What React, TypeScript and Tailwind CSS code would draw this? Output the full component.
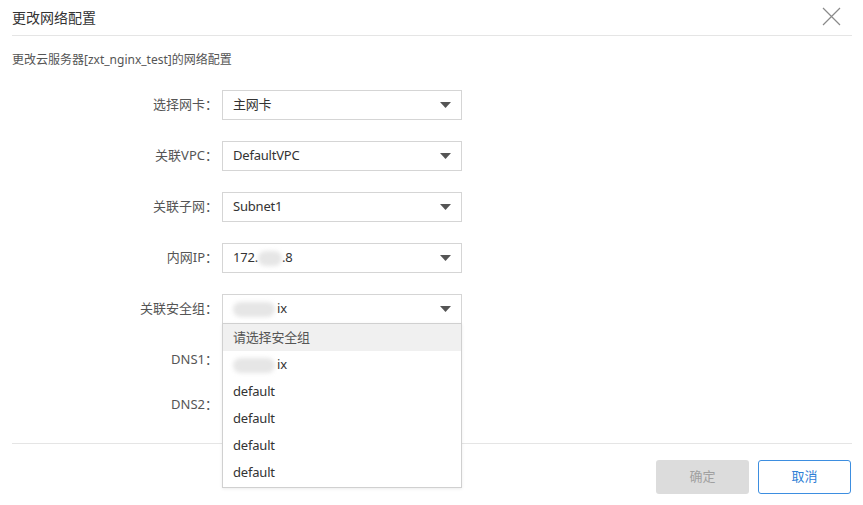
import React from "react";

const FONT = { fontFamily: '"Noto Sans", "Noto Sans CJK SC", sans-serif' };

const Caret = () => (
  <svg width="11" height="6" viewBox="0 0 11 6" className="shrink-0">
    <path d="M0 0 H11 L5.5 6 Z" fill="#555" />
  </svg>
);

const Blur = ({ w }: { w: number }) => (
  <span
    className="inline-block h-[15px] rounded-full bg-[#e6e6e6] blur-[2px] align-middle"
    style={{ width: w }}
  />
);

interface RowProps {
  label: string;
  children?: React.ReactNode;
  select?: boolean;
  overlay?: React.ReactNode;
}

const Row: React.FC<RowProps> = ({ label, children, select = true, overlay }) => (
  <div className="flex items-center h-[30px]">
    <div className="w-[218px] text-right text-[13px] text-[#555]">{label}</div>
    <div className="relative ml-[4px] w-[240px] h-[30px]">
      <div className="flex items-center justify-between h-full border border-[#d5d5d5] bg-white pl-[10px] pr-[10px] text-[13px] text-[#333] tracking-[-0.2px]">
        <span className="flex items-center">{children}</span>
        {select && <Caret />}
      </div>
      {overlay}
    </div>
  </div>
);

export default function App() {
  const options = ["default", "default", "default", "default"];

  return (
    <div className="w-[863px] h-[505px] bg-white relative" style={FONT}>
      {/* 헤더 */}
      <div className="flex items-center justify-between h-[36px] ml-3 mr-[11px] border-b border-[#e5e5e5]">
        <h1 className="text-[14px] text-[#333]">更改网络配置</h1>
        <svg width="19" height="19" viewBox="0 0 19 19" className="mr-[11px] mb-[2px]">
          <path d="M1 1 L18 18 M18 1 L1 18" stroke="#8a8a8a" strokeWidth="1.2" />
        </svg>
      </div>

      <p className="ml-3 mt-[15px] text-[12px] leading-[18px] text-[#555]">
        更改云服务器[zxt_nginx_test]的网络配置
      </p>

      {/* 폼 */}
      <div className="flex flex-col gap-[21px] mt-[21px]">
        <Row label="选择网卡：">主网卡</Row>
        <Row label="关联VPC：">DefaultVPC</Row>
        <Row label="关联子网：">Subnet1</Row>
        <Row label="内网IP：">
          172.
          <Blur w={24} />
          .8
        </Row>
        <Row
          label="关联安全组："
          overlay={
            <div className="absolute left-0 top-[29px] z-10 w-[240px] pb-[1px] border border-[#d0d0d0] bg-white shadow-[0_1px_3px_rgba(0,0,0,0.08)] text-[13px] text-[#333] tracking-[-0.2px]">
              <div className="flex items-center h-[27px] px-[10px] pt-[1px] bg-[#f0f0f0] text-[#555]">
                请选择安全组
              </div>
              <div className="flex items-center h-[27px] px-[10px] pt-[1px]">
                <Blur w={42} />
                <span className="ml-[2px]">ix</span>
              </div>
              {options.map((o, i) => (
                <div key={i} className="flex items-center h-[27px] px-[10px] pt-[1px]">
                  {o}
                </div>
              ))}
            </div>
          }
        >
          <Blur w={42} />
          <span className="ml-[2px]">ix</span>
        </Row>
        <Row label="DNS1：" select={false} />
        <div className="-mt-[6px]">
          <Row label="DNS2：" select={false} />
        </div>
      </div>

      {/* 하단 */}
      <div className="ml-3 mr-[11px] mt-[23px] border-t border-[#e5e5e5]" />
      <div className="flex justify-end gap-[9px] mt-[16px] mr-[12px]">
        <button
          type="button"
          disabled
          className="w-[93px] h-[34px] rounded-[3px] bg-[#dcdcdc] text-[13px] text-[#a0a0a0]"
        >
          确定
        </button>
        <button
          type="button"
          className="w-[93px] h-[34px] rounded-[3px] border border-[#3d8ee0] bg-white text-[13px] text-[#2f80d6]"
        >
          取消
        </button>
      </div>
    </div>
  );
}
